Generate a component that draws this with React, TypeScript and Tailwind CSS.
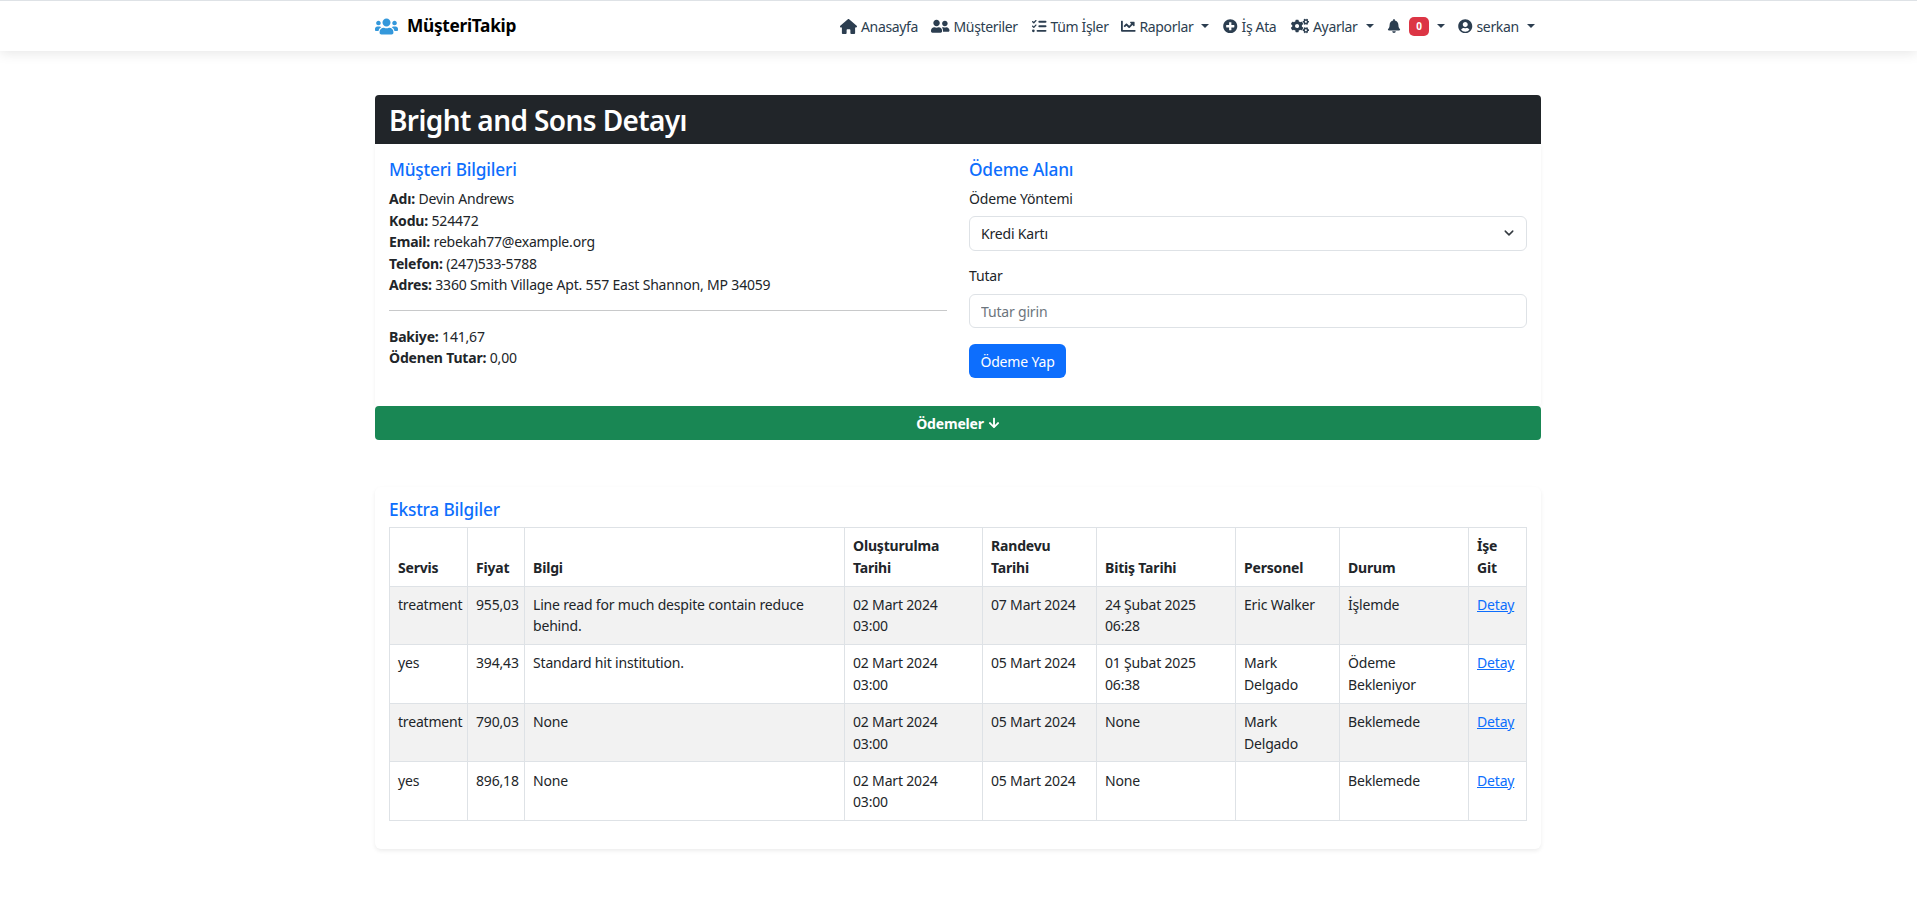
import React from "react";
import { FaUsers, FaChartLine, FaPlusCircle, FaCogs, FaBell, FaUserCircle, FaArrowDown, FaUserFriends } from "react-icons/fa";
import { FaListCheck, FaHouse } from "react-icons/fa6";

const font = "font-['Noto_Sans','Open_Sans',sans-serif]";

function Caret() {
  return <span className="ml-[8px] inline-block w-0 h-0 border-x-[4px] border-x-transparent border-t-[4px] border-t-[#2c3e50]" />;
}

function NavItem({ icon, label, caret, w }: { icon: React.ReactNode; label: string; caret?: boolean; w: string }) {
  return (
    <a className={`flex items-center text-[14px] tracking-[-0.35px] text-[#2c3e50] whitespace-nowrap ${w}`}>
      {icon}
      <span className="ml-[4px]">{label}</span>
      {caret && <Caret />}
    </a>
  );
}

function Info({ k, v }: { k: string; v: string }) {
  return (
    <p className="leading-[21.5px]">
      <strong className="font-bold">{k}</strong> {v}
    </p>
  );
}

const rows = [
  ["treatment", "955,03", "Line read for much despite contain reduce behind.", "02 Mart 2024 03:00", "07 Mart 2024", "24 Şubat 2025 06:28", "Eric Walker", "İşlemde"],
  ["yes", "394,43", "Standard hit institution.", "02 Mart 2024 03:00", "05 Mart 2024", "01 Şubat 2025 06:38", "Mark Delgado", "Ödeme Bekleniyor"],
  ["treatment", "790,03", "None", "02 Mart 2024 03:00", "05 Mart 2024", "None", "Mark Delgado", "Beklemede"],
  ["yes", "896,18", "None", "02 Mart 2024 03:00", "05 Mart 2024", "None", "", "Beklemede"],
];
const heads = ["Servis", "Fiyat", "Bilgi", "Oluşturulma Tarihi", "Randevu Tarihi", "Bitiş Tarihi", "Personel", "Durum", "İşe Git"];

export default function App() {
  return (
    <div className={`${font} min-h-[908px] bg-white text-[#212529] text-[14px] tracking-[-0.18px]`}>
      <nav className="h-[51px] border-t border-[#dee2e6] bg-white shadow-[0_2px_12px_rgba(0,0,0,0.1)]">
        <div className="w-[1166px] ml-[375px] h-full flex items-center justify-between">
          <a className="flex items-center text-[17.3px] font-bold text-black tracking-[-0.3px]">
            <FaUsers className="text-[#3498db] text-[23px] mr-[9px]" />
            MüşteriTakip
          </a>
          <div className="flex items-center">
            <NavItem w="w-[91px]" icon={<FaHouse className="text-[17px]" />} label="Anasayfa" />
            <NavItem w="w-[101px]" icon={<FaUserFriends className="text-[18.5px]" />} label="Müşteriler" />
            <NavItem w="w-[89px]" icon={<FaListCheck className="text-[14.5px]" />} label="Tüm İşler" />
            <NavItem w="w-[102px]" icon={<FaChartLine className="text-[14.5px]" />} label="Raporlar" caret />
            <NavItem w="w-[68px]" icon={<FaPlusCircle className="text-[14.5px]" />} label="İş Ata" />
            <NavItem w="w-[96px]" icon={<FaCogs className="text-[18px]" />} label="Ayarlar" caret />
            <a className="flex items-center w-[71px] text-[#2c3e50]">
              <FaBell className="text-[14px]" />
              <span className="ml-[8px] w-[20px] h-[19px] flex items-center justify-center rounded-[5px] bg-[#dc3545] text-white text-[10px] font-bold">0</span>
              <Caret />
            </a>
            <NavItem w="w-[83px]" icon={<FaUserCircle className="text-[14.5px]" />} label="serkan" caret />
          </div>
        </div>
      </nav>

      <main className="w-[1166px] ml-[375px] pt-[44px]">
        <h2 className="h-[49px] flex items-center bg-[#212529] text-white text-[28px] font-semibold tracking-[-0.6px] px-[14px] rounded-t-[4px]">
          Bright and Sons Detayı
        </h2>
        <section className="h-[262px] flex gap-[22px] pl-[14px] bg-white rounded-b-[4px] shadow-[0_1px_4px_rgba(0,0,0,0.06)]">
          <div className="w-[558px] pt-[14px]">
            <h5 className="text-[17.3px] leading-[24px] font-medium text-[#0d6efd] mb-[6px]">Müşteri Bilgileri</h5>
            <Info k="Adı:" v="Devin Andrews" />
            <Info k="Kodu:" v="524472" />
            <Info k="Email:" v="rebekah77@example.org" />
            <Info k="Telefon:" v="(247)533-5788" />
            <Info k="Adres:" v="3360 Smith Village Apt. 557 East Shannon, MP 34059" />
            <hr className="mt-[14px] mb-[15px] border-t border-[#c8c9ca]" />
            <Info k="Bakiye:" v="141,67" />
            <Info k="Ödenen Tutar:" v="0,00" />
          </div>
          <div className="w-[558px] pt-[14px]">
            <h5 className="text-[17.3px] leading-[24px] font-medium text-[#0d6efd] mb-[6px]">Ödeme Alanı</h5>
            <label className="block leading-[21px] mb-[7px]">Ödeme Yöntemi</label>
            <div className="relative">
              <select className="w-full h-[35px] appearance-none border border-[#dee2e6] rounded-[6px] bg-white pl-[11px] text-[#212529] outline-none">
                <option>Kredi Kartı</option>
              </select>
              <svg className="absolute right-[13px] top-[13px] w-[10px] h-[8px]" viewBox="0 0 16 12" fill="none">
                <path d="M2 3l6 6 6-6" stroke="#343a40" strokeWidth="2.4" strokeLinecap="round" strokeLinejoin="round" />
              </svg>
            </div>
            <label className="block leading-[21px] mt-[14px] mb-[8px]">Tutar</label>
            <input
              placeholder="Tutar girin"
              className="block w-full h-[34px] border border-[#dee2e6] rounded-[6px] bg-white pl-[11px] outline-none placeholder:text-[#6c757d]"
            />
            <button className="mt-[16px] block w-[97px] h-[34px] rounded-[6px] bg-[#0d6efd] text-white">Ödeme Yap</button>
          </div>
        </section>
        <button className="w-full h-[34px] flex items-center justify-center rounded-[4px] bg-[#198754] text-white font-bold">
          Ödemeler
          <FaArrowDown className="text-[12px] ml-[4px]" />
        </button>

        <section className="mt-[47px] h-[362px] px-[14px] pt-[10px] bg-white rounded-[6px] shadow-[0_2px_4px_rgba(0,0,0,0.075)]">
          <h5 className="text-[17.3px] leading-[25px] font-medium text-[#0d6efd] mb-[5px]">Ekstra Bilgiler</h5>
          <table className="w-[1137px] table-fixed border-collapse text-left leading-[21.5px]">
            <colgroup>
              <col className="w-[78px]" />
              <col className="w-[57px]" />
              <col className="w-[320px]" />
              <col className="w-[138px]" />
              <col className="w-[114px]" />
              <col className="w-[139px]" />
              <col className="w-[104px]" />
              <col className="w-[129px]" />
              <col className="w-[58px]" />
            </colgroup>
            <thead>
              <tr>
                {heads.map((h) => (
                  <th key={h} className="border border-[#dee2e6] px-[8px] py-[7.3px] align-bottom font-bold">{h}</th>
                ))}
              </tr>
            </thead>
            <tbody>
              {rows.map((r, i) => (
                <tr key={i} className={i % 2 === 0 ? "bg-[#f2f2f2]" : "bg-white"}>
                  {r.map((c, j) => (
                    <td key={j} className="border border-[#dee2e6] px-[8px] py-[7.3px] align-top">{c}</td>
                  ))}
                  <td className="border border-[#dee2e6] px-[8px] py-[7.3px] align-top">
                    <a className="text-[#0d6efd] underline">Detay</a>
                  </td>
                </tr>
              ))}
            </tbody>
          </table>
        </section>
      </main>
    </div>
  );
}
